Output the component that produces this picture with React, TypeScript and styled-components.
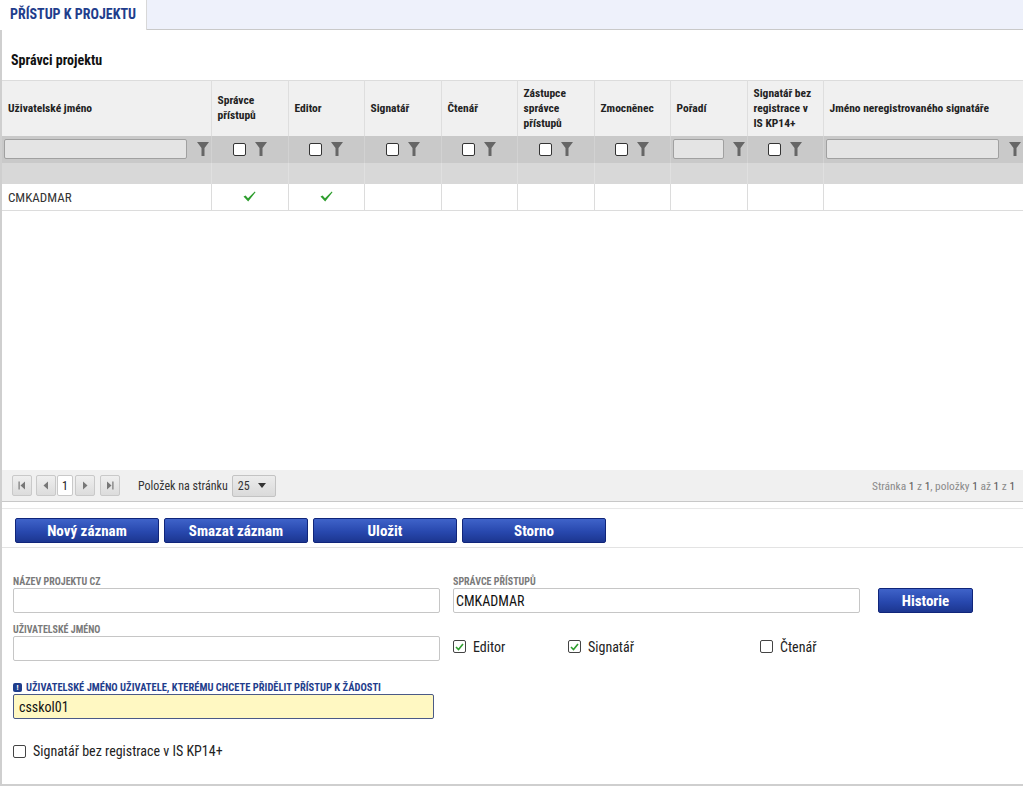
import React from 'react';
import styled, {createGlobalStyle} from "styled-components";

const FONT = `"Roboto Condensed", "Liberation Sans Narrow", "Arial Narrow", Roboto, sans-serif`;

const GlobalStyle = createGlobalStyle`
  body {
    margin: 0;
    background: #fff;
    font-family: ${FONT};
    font-stretch: 75%;
    color: #222;
  }
`

const COLS = [209, 77, 76, 77, 76, 77, 76, 77, 76, 200];

const columns = [
    {title: 'Uživatelské jméno', filter: 'text'},
    {title: 'Správce přístupů', filter: 'check'},
    {title: 'Editor', filter: 'check'},
    {title: 'Signatář', filter: 'check'},
    {title: 'Čtenář', filter: 'check'},
    {title: 'Zástupce správce přístupů', filter: 'check'},
    {title: 'Zmocněnec', filter: 'check'},
    {title: 'Pořadí', filter: 'small'},
    {title: 'Signatář bez registrace v IS KP14+', filter: 'check'},
    {title: 'Jméno neregistrovaného signatáře', filter: 'text'},
];

const Funnel = () => (
    <svg width="12" height="14" viewBox="0 0 12 14">
        <path d="M0 0 H12 L7.5 6 V14 H4.5 V6 Z" fill="#666"/>
    </svg>
);

const Tick = () => (
    <svg width="13" height="11" viewBox="0 0 13 11">
        <path d="M0.5 5.5 L2.6 4.6 L5 7.2 L11.8 0.5 L12.5 1.3 L5.2 10.5 Z" fill="#2e9e2e"/>
    </svg>
);

const SmallTick = () => (
    <svg width="9" height="8" viewBox="0 0 9 8">
        <path d="M1 4 L3.5 6.5 L8 1" stroke="#2e9e2e" strokeWidth="1.6" fill="none"/>
    </svg>
);

const PagerIcon = ({kind}: { kind: 'first' | 'prev' | 'next' | 'last' }) => (
    <svg width="8" height="9" viewBox="0 0 8 9">
        {kind === 'first' && <><rect x="0.5" y="0.5" width="1.2" height="8" fill="#777"/><path d="M7 0.5 V8.5 L2.5 4.5 Z" fill="#777"/></>}
        {kind === 'prev' && <path d="M6 0.5 V8.5 L1.5 4.5 Z" fill="#777"/>}
        {kind === 'next' && <path d="M2 0.5 V8.5 L6.5 4.5 Z" fill="#777"/>}
        {kind === 'last' && <><path d="M1 0.5 V8.5 L5.5 4.5 Z" fill="#777"/><rect x="6.3" y="0.5" width="1.2" height="8" fill="#777"/></>}
    </svg>
);

const App = () => {
    return (
        <>
            <GlobalStyle/>
            <Page>
                <TabBar>
                    <Tab>PŘÍSTUP K PROJEKTU</Tab>
                </TabBar>
                <Panel>
                    <SectionTitle>Správci projektu</SectionTitle>
                    <Grid>
                        <colgroup>
                            {COLS.map((w, i) => <col key={i} style={{width: w}}/>)}
                        </colgroup>
                        <thead>
                        <HeadRow>
                            {columns.map(c => <HeadCell key={c.title}>{c.title}</HeadCell>)}
                        </HeadRow>
                        <FilterRow>
                            {columns.map(c => (
                                <FilterCell key={c.title}>
                                    <FilterWrap $align={c.filter === 'check' ? 'center' : 'left'}>
                                        {c.filter === 'check' && <FilterBox/>}
                                        {c.filter === 'text' && <FilterInput $wide/>}
                                        {c.filter === 'small' && <FilterInput/>}
                                        <Funnel/>
                                    </FilterWrap>
                                </FilterCell>
                            ))}
                        </FilterRow>
                        <GroupRow>
                            {columns.map(c => <GroupCell key={c.title}/>)}
                        </GroupRow>
                        </thead>
                        <tbody>
                        <DataRow>
                            <DataCell>CMKADMAR</DataCell>
                            <DataCell $center><Tick/></DataCell>
                            <DataCell $center><Tick/></DataCell>
                            {columns.slice(3).map(c => <DataCell key={c.title}/>)}
                        </DataRow>
                        </tbody>
                    </Grid>
                    <EmptyArea/>
                    <Pager>
                        <PagerLeft>
                            <PageButton><PagerIcon kind="first"/></PageButton>
                            <PageButton $gap={4}><PagerIcon kind="prev"/></PageButton>
                            <PageNumber>1</PageNumber>
                            <PageButton $gap={2}><PagerIcon kind="next"/></PageButton>
                            <PageButton $gap={5}><PagerIcon kind="last"/></PageButton>
                            <PerPage>Položek na stránku</PerPage>
                            <PerPageSelect>
                                25
                                <svg width="8" height="5" viewBox="0 0 8 5"><path d="M0 0 H8 L4 5 Z" fill="#333"/></svg>
                            </PerPageSelect>
                        </PagerLeft>
                        <PagerInfo>
                            Stránka <b>1</b> z <b>1</b>, položky <b>1</b> až <b>1</b> z <b>1</b>
                        </PagerInfo>
                    </Pager>
                    <Toolbar>
                        <BlueButton>Nový záznam</BlueButton>
                        <BlueButton>Smazat záznam</BlueButton>
                        <BlueButton>Uložit</BlueButton>
                        <BlueButton>Storno</BlueButton>
                    </Toolbar>
                    <Form>
                        <Field>
                            <Label>Název projektu CZ</Label>
                            <TextBox/>
                        </Field>
                        <Field>
                            <Label>Správce přístupů</Label>
                            <FieldLine>
                                <TextBox $width={407} $tight>CMKADMAR</TextBox>
                                <BlueButton $small>Historie</BlueButton>
                            </FieldLine>
                        </Field>
                        <Field>
                            <Label>Uživatelské jméno</Label>
                            <TextBox/>
                        </Field>
                        <Checks>
                            <CheckItem $width={115}><CheckBox $checked><SmallTick/></CheckBox>Editor</CheckItem>
                            <CheckItem $width={192}><CheckBox $checked><SmallTick/></CheckBox>Signatář</CheckItem>
                            <CheckItem><CheckBox/>Čtenář</CheckItem>
                        </Checks>
                        <Field $span $top={10}>
                            <Label $required>
                                <Bang>!</Bang>
                                Uživatelské jméno uživatele, kterému chcete přidělit přístup k žádosti
                            </Label>
                            <TextBox $width={421} $highlight>csskol01</TextBox>
                        </Field>
                        <Field $span>
                            <CheckItem $big><CheckBox/>Signatář bez registrace v IS KP14+</CheckItem>
                        </Field>
                    </Form>
                </Panel>
            </Page>
        </>
    );
};

export default App;

const Page = styled.div`
  width: 1023px;
  height: 790px;
  overflow: hidden;
`

const TabBar = styled.div`
  display: flex;
  height: 29px;
  background: #eef1fb;
  border-bottom: 1px solid #c9c9c9;
`

const Tab = styled.div`
  display: flex;
  align-items: center;
  padding: 0 10px 2px 10px;
  white-space: nowrap;
  background: #fff;
  border-right: 1px solid #d8d8d8;
  margin-bottom: -1px;
  color: #1f3d8c;
  font-weight: 700;
  font-size: 14px;
`

const Panel = styled.div`
  border-left: 2px solid #cfcfcf;
  border-bottom: 2px solid #cfcfcf;
  height: 754px;
  display: flex;
  flex-direction: column;
`

const SectionTitle = styled.div`
  height: 50px;
  box-sizing: border-box;
  padding: 22px 0 0 9px;
  font-size: 14px;
  font-weight: 700;
  color: #111;
`

const Grid = styled.table`
  border-collapse: collapse;
  table-layout: fixed;
  width: 1021px;
`

const HeadRow = styled.tr`
  height: 55px;
  background: #f0f0f0;
  border-top: 1px solid #dcdcdc;
`

const HeadCell = styled.th`
  text-align: left;
  vertical-align: middle;
  padding: 0 6px;
  font-size: 11.5px;
  line-height: 15px;
  font-weight: 700;
  color: #222;
  border-left: 1px solid #dedede;

  &:first-child {
    border-left: none;
  }
`

const FilterRow = styled.tr`
  height: 27px;
  background: #c9c9c9;
`

const FilterCell = styled.td`
  padding: 0 2px;
  border-left: 1px solid #d2d2d2;

  &:first-child {
    border-left: none;
  }
`

const FilterWrap = styled.div<{ $align: string }>`
  display: flex;
  align-items: center;
  justify-content: ${props => props.$align === 'center' ? 'center' : 'space-between'};
  gap: 9px;
`

const FilterBox = styled.span`
  width: 11px;
  height: 11px;
  background: #fff;
  border: 1px solid #333;
  border-radius: 2px;
`

const FilterInput = styled.span<{ $wide?: boolean }>`
  flex: 1;
  height: 18px;
  background: #e4e4e4;
  border: 1px solid #a0a0a0;
  border-radius: 2px;
  margin-right: ${props => props.$wide ? '1px' : '0'};
`

const GroupRow = styled.tr`
  height: 21px;
  background: #d8d8d8;
`

const GroupCell = styled.td`
  border-left: 1px solid #e0e0e0;

  &:first-child {
    border-left: none;
  }
`

const DataRow = styled.tr`
  height: 27px;
  border-bottom: 1px solid #dcdcdc;
`

const DataCell = styled.td<{ $center?: boolean }>`
  padding: 0 6px;
  font-size: 13px;
  color: #333;
  text-align: ${props => props.$center ? 'center' : 'left'};
  border-left: 1px solid #dcdcdc;
  padding-top: 2px;

  &:first-child {
    border-left: none;
  }

  svg {
    margin-top: -7px;
  }
`

const EmptyArea = styled.div`
  height: 259px;
`

const Pager = styled.div`
  height: 32px;
  box-sizing: border-box;
  background: #f0f0f0;
  border-bottom: 1px solid #c8c8c8;
  display: flex;
  align-items: center;
  justify-content: space-between;
  padding: 0 8px 0 10px;
`

const PagerLeft = styled.div`
  display: flex;
  align-items: center;
`

const PageButton = styled.span<{ $gap?: number }>`
  width: 18px;
  height: 19px;
  margin-left: ${props => props.$gap || 0}px;
  border: 1px solid #c9c9c9;
  border-radius: 2px;
  background: linear-gradient(#efefef, #dcdcdc);
  display: flex;
  align-items: center;
  justify-content: center;
`

const PageNumber = styled.span`
  width: 14px;
  height: 19px;
  margin-left: 1px;
  border: 1px solid #c9c9c9;
  border-radius: 2px;
  background: #fff;
  font-size: 12px;
  display: flex;
  align-items: center;
  justify-content: center;
  color: #222;
`

const PerPage = styled.span`
  margin-left: 18px;
  font-size: 12px;
  color: #333;
`

const PerPageSelect = styled.span`
  margin-left: 4px;
  width: 44px;
  height: 22px;
  box-sizing: border-box;
  padding: 0 9px 0 5px;
  border: 1px solid #c3c3c3;
  border-radius: 2px;
  background: linear-gradient(#ececec, #dadada);
  display: flex;
  align-items: center;
  justify-content: space-between;
  font-size: 12px;
  color: #333;
`

const PagerInfo = styled.span`
  font-size: 11.4px;
  color: #8a8a8a;

  b {
    font-weight: 400;
    color: #555;
  }
`

const Toolbar = styled.div`
  margin: 6px 0 0 0;
  padding: 9px 13px 4px 13px;
  border-top: 1px solid #e8e8e8;
  border-bottom: 1px solid #e3e3e3;
  display: flex;
  gap: 5px;
`

const BlueButton = styled.button<{ $small?: boolean }>`
  width: ${props => props.$small ? '95px' : '144px'};
  height: 25px;
  margin-left: ${props => props.$small ? '18px' : '0'};
  padding: 0;
  border: 1px solid #10257a;
  border-radius: 2px;
  background: linear-gradient(#3f63c9, #2848ae 55%, #1c3690);
  color: #fff;
  font-family: ${FONT};
  font-stretch: 75%;
  font-size: 15px;
  font-weight: 700;
`

const Form = styled.div`
  display: grid;
  grid-template-columns: 427px 1fr;
  column-gap: 13px;
  padding: 27px 0 0 11px;
  row-gap: 0;
`

const Field = styled.div<{ $span?: boolean; $top?: number }>`
  grid-column: ${props => props.$span ? '1 / 3' : 'auto'};
  display: flex;
  flex-direction: column;
  margin-top: ${props => props.$top || 0}px;
  margin-bottom: 10px;
`

const FieldLine = styled.div`
  display: flex;
  align-items: center;
`

const Label = styled.label<{ $required?: boolean }>`
  display: flex;
  align-items: center;
  gap: 4px;
  height: 13px;
  font-size: ${props => props.$required ? '10.5px' : '10px'};
  font-weight: 700;
  text-transform: uppercase;
  color: ${props => props.$required ? '#1f3d8c' : '#7a7a7a'};
`

const Bang = styled.span`
  width: 9px;
  height: 9px;
  border-radius: 2px;
  background: #1f3d8c;
  color: #fff;
  font-size: 8px;
  line-height: 9px;
  text-align: center;
`

const TextBox = styled.div<{ $width?: number; $highlight?: boolean; $tight?: boolean }>`
  width: ${props => props.$width ? props.$width : 427}px;
  height: 25px;
  box-sizing: border-box;
  border: 1px solid ${props => props.$highlight ? '#4b5a86' : '#c6c6c6'};
  border-radius: 2px;
  background: ${props => props.$highlight ? '#fff8c2' : '#fff'};
  padding: 0 ${props => props.$tight ? 2 : 5}px;
  display: flex;
  align-items: center;
  font-size: 14px;
  color: #111;
`

const Checks = styled.div`
  display: flex;
  align-items: center;
  height: 25px;
  margin-top: 11px;
`

const CheckItem = styled.label<{ $width?: number; $big?: boolean }>`
  display: flex;
  align-items: center;
  gap: 7px;
  width: ${props => props.$width ? props.$width + 'px' : 'auto'};
  font-size: 14px;
  color: #222;
  margin-top: ${props => props.$big ? '14px' : '0'};
`

const CheckBox = styled.span<{ $checked?: boolean }>`
  width: 11px;
  height: 11px;
  border: 1px solid #444;
  border-radius: 2px;
  background: #fff;
  display: flex;
  align-items: center;
  justify-content: center;
`
